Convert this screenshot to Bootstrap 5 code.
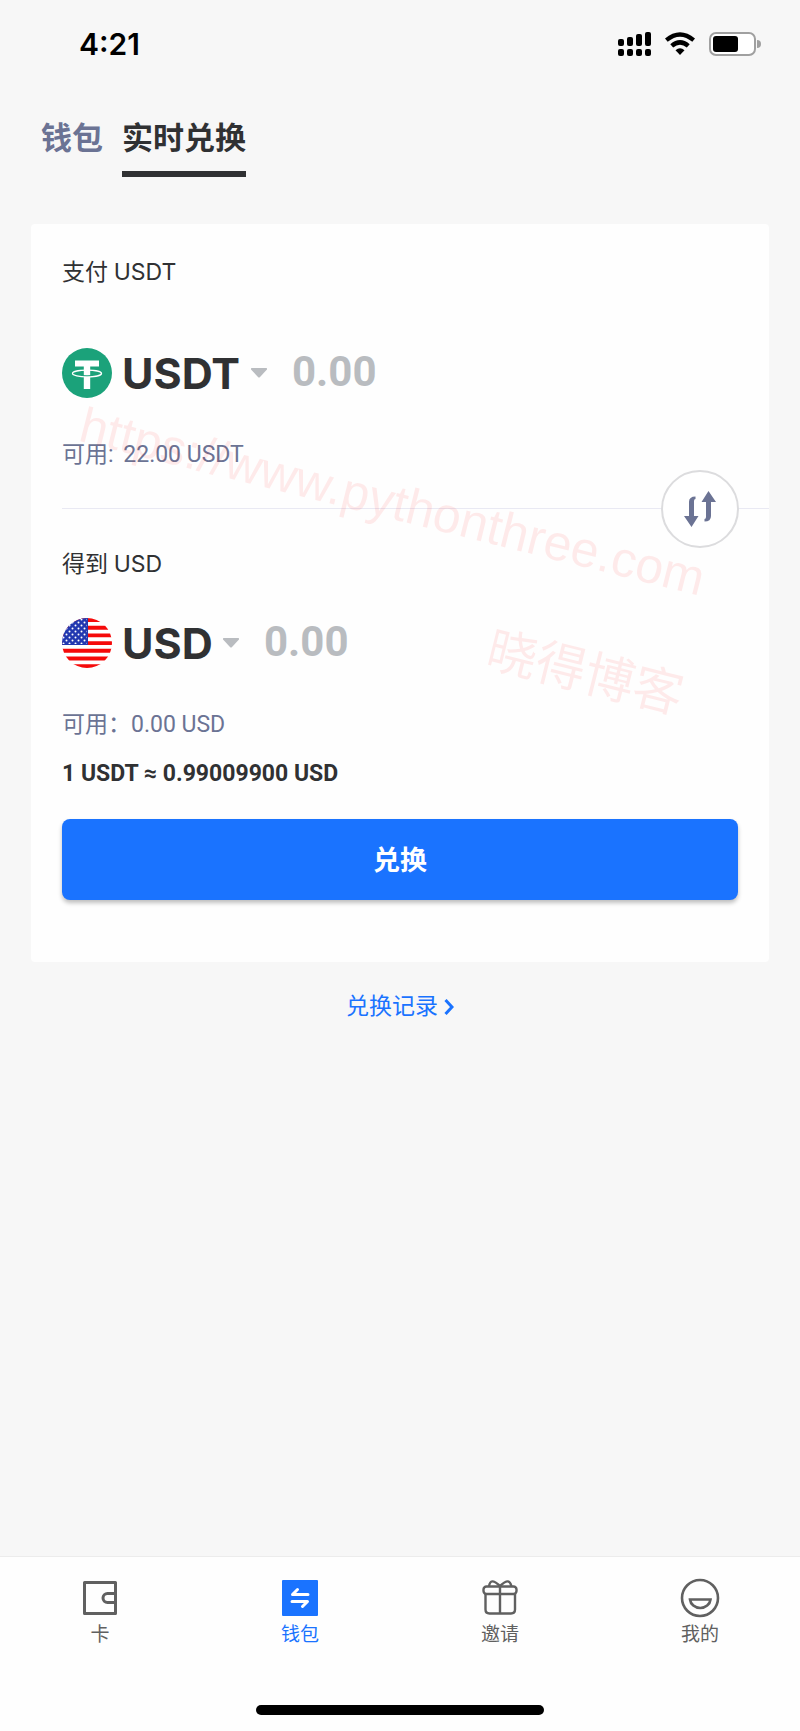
<!DOCTYPE html>
<html lang="zh-CN">
<head>
<meta charset="utf-8">
<meta name="viewport" content="width=device-width, initial-scale=1">
<title>实时兑换</title>
<link href="https://cdn.jsdelivr.net/npm/bootstrap@5.3.0/dist/css/bootstrap.min.css" rel="stylesheet">
<style>
  :root { --ink: #303133; --slate: #6b7394; --brand: #1a73ff; --hint: #b9bcc0; --mute: #606060; }
  body { background: #f7f7f7; color: var(--ink); font-family: Roboto, "Noto Sans CJK SC", sans-serif; font-size: 23px; line-height: 32px; }
  svg { display: block; flex: none; }
  .status-bar { height: 88px; padding: 0 39px 0 79px; color: #000; font: 600 30px/40px Inter, sans-serif; }
  .status-icons { gap: 14px; }
  .page-tabs { padding: 27px 41px 0; gap: 19px; font-size: 31px; font-weight: 700; line-height: 48px; }
  .page-tabs a { color: var(--slate); text-decoration: none; padding-bottom: 8px; border-bottom: 6px solid transparent; }
  .page-tabs a.active { color: var(--ink); border-color: var(--ink); }
  .swap-card { background: #fefefe; margin: 47px 31px 0; padding: 33px 31px 62px; border-radius: 4px; }
  .latin { font-family: Inter, sans-serif; line-height: 1; }
  .money { height: 50px; gap: 10px; }
  .coin-select { appearance: none; border: 0; padding: 0; background: none; color: var(--ink); font: 700 43px/50px Inter, sans-serif; }
  .amount { border: 0; padding: 0 0 2px; margin-left: 15px; min-width: 0; background: none; color: var(--ink); font: 700 42px/48px Roboto, sans-serif; }
  .amount::placeholder { color: var(--hint); opacity: 1; }
  .pay-label { margin-bottom: 59px; }
  .get-label { margin-bottom: 37px; }
  .available { color: var(--slate); margin-top: 41px; }
  .divider { height: 1px; background: #e9e9f3; margin: 37px -31px 40px 0; }
  .swap-btn { width: 78px; height: 78px; right: 30px; top: 50%; transform: translateY(-50%); border: 2px solid #dcdcde; background: #fff; z-index: 2; }
  .rate { margin: 17px 0 29px; font-weight: 700; }
  .btn-exchange { --bs-btn-bg: var(--brand); --bs-btn-color: #fff; --bs-btn-hover-bg: #0d63ea; --bs-btn-hover-color: #fff; height: 81px; border: 0; border-radius: 8px; padding: 10px 0 6px; font-size: 27px; font-weight: 700; box-shadow: 0 3px 4px rgba(0,0,0,.25); }
  .records { margin-top: 29px; }
  .records a { color: var(--brand); text-decoration: none; gap: 6px; }
  .watermark { font-family: "Liberation Sans", "Noto Sans CJK SC", sans-serif; font-size: 50px; line-height: 60px; color: rgba(255,0,0,.08); transform: rotate(14deg); transform-origin: 0 50%; white-space: nowrap; pointer-events: none; z-index: 1; }
  .mark-url { left: 50px; top: 170px; }
  .mark-name { left: 457px; top: 395px; }
  .bottom-bar { background: #fefefe; border-top: 1px solid #ececec; padding: 20px 0 16px; font-size: 19px; line-height: 24px; }
  .bottom-bar a { color: var(--mute); text-decoration: none; gap: 4px; }
  .bottom-bar a.active { color: var(--brand); }
  .home-pill { width: 36%; height: 10px; margin-top: 58px; background: #000; }
</style>
</head>
<body class="d-flex flex-column min-vh-100">
<header>
  <div class="status-bar d-flex align-items-center justify-content-between">
    <span>4:21</span>
    <div class="status-icons d-flex align-items-center">
      <svg width="33" height="24" viewBox="0 0 33 24" aria-hidden="true">
        <rect x="0" y="7" width="6" height="7" rx="2"/><rect x="9" y="5" width="6" height="9" rx="2"/><rect x="18" y="2" width="6" height="12" rx="2"/><rect x="27" y="0" width="6" height="14" rx="2"/>
        <rect x="0" y="17" width="6" height="7" rx="2"/><rect x="9" y="17" width="6" height="7" rx="2"/><rect x="18" y="17" width="6" height="7" rx="2"/><rect x="27" y="17" width="6" height="7" rx="2"/>
      </svg>
      <svg width="30" height="24" viewBox="0 0 30 24" aria-hidden="true">
        <path d="M0 6.500Q15-6 30 6.500L27.300 9.800Q15-.5 2.700 9.800Z"/><path d="M5.300 12.200Q15 3.800 24.700 12.200L21.800 15.500Q15 9.800 8.200 15.500Z"/><path d="M10.500 18.200Q15 14.300 19.500 18.200L15 23Z"/>
      </svg>
      <svg width="52" height="24" viewBox="0 0 52 24" aria-hidden="true">
        <rect x="1" y="1" width="45" height="22" rx="6" fill="#fff" stroke="#a0a0a0" stroke-width="2"/><rect x="4" y="4" width="25" height="16" rx="3"/><path d="M48 8a4 4 0 0 1 0 8Z" fill="#a0a0a0"/>
      </svg>
    </div>
  </div>
  <nav class="page-tabs d-flex" aria-label="页面">
    <a href="#wallet">钱包</a>
    <a href="#exchange" class="active" aria-current="page">实时兑换</a>
  </nav>
</header>

<main class="flex-grow-1">
  <form class="swap-card position-relative">
    <label class="pay-label d-block" for="pay">支付 <span class="latin">USDT</span></label>
    <div class="money d-flex align-items-center">
      <svg width="50" height="50" viewBox="0 0 50 50" aria-hidden="true">
        <circle cx="25" cy="25" r="25" fill="#1ba27a"/>
        <path d="M13 12.500H37V18.500H28.200V41H21.800V18.500H13Z" fill="#fff"/>
        <ellipse cx="25" cy="25.500" rx="14.500" ry="3.300" fill="none" stroke="#fff" stroke-width="1.300"/>
        <path d="M21 27.600Q25 28 29 27.600" fill="none" stroke="#1ba27a" stroke-width="1"/>
      </svg>
      <select class="coin-select" aria-label="支付币种"><option>USDT</option></select>
      <svg width="16" height="10" viewBox="0 0 16 10" aria-hidden="true"><path d="M1 0H15Q17 0 15.500 2L9 9Q8 10 7 9L.5 2Q-1 0 1 0Z" fill="#b9bcc0"/></svg>
      <input id="pay" class="amount flex-grow-1" type="text" inputmode="decimal" placeholder="0.00">
    </div>
    <div class="available">可用: <span class="ms-1">22.00 USDT</span></div>
    <div class="divider position-relative">
      <button type="button" class="swap-btn position-absolute rounded-circle p-0 d-flex align-items-center justify-content-center" aria-label="互换币种">
        <svg width="32" height="36" viewBox="0 0 32 36" fill="#6b7394" aria-hidden="true">
          <path d="M11.500 5.500V8Q10 8 10 10V25H14.500L7.500 36L0 25H5V11Q5 5.500 11.500 5.500Z"/>
          <path d="M20.500 30.500V28Q22 28 22 26V11H17.500L24.500 0L32 11H27V25Q27 30.500 20.500 30.500Z"/>
        </svg>
      </button>
    </div>
    <label class="get-label d-block" for="get">得到 <span class="latin">USD</span></label>
    <div class="money d-flex align-items-center">
      <svg width="50" height="50" viewBox="0 0 50 50" aria-hidden="true">
        <defs>
          <clipPath id="disc"><circle cx="25" cy="25" r="25"/></clipPath>
          <pattern id="stars" width="6" height="6" patternUnits="userSpaceOnUse"><circle cx="1.500" cy="1.500" r="1" fill="#fff"/><circle cx="4.500" cy="4.500" r="1" fill="#fff"/></pattern>
        </defs>
        <g clip-path="url(#disc)">
          <path fill="#fff" d="M0 0H50V50H0Z"/>
          <path d="M0 2H50M0 9.700H50M0 17.400H50M0 25.100H50M0 32.800H50M0 40.500H50M0 48.200H50" stroke="#f50a0a" stroke-width="3.900"/>
          <path fill="#2238b0" d="M0 0H26V27H0Z"/><path fill="url(#stars)" d="M0 0H25V26H0Z"/>
        </g>
      </svg>
      <select class="coin-select" aria-label="得到币种"><option>USD</option></select>
      <svg width="16" height="10" viewBox="0 0 16 10" aria-hidden="true"><path d="M1 0H15Q17 0 15.500 2L9 9Q8 10 7 9L.5 2Q-1 0 1 0Z" fill="#b9bcc0"/></svg>
      <input id="get" class="amount flex-grow-1" type="text" inputmode="decimal" placeholder="0.00">
    </div>
    <div class="available">可用：0.00 USD</div>
    <div class="rate">1 USDT ≈ 0.99009900 USD</div>
    <button type="submit" class="btn btn-exchange w-100">兑换</button>
    <div class="watermark mark-url position-absolute" aria-hidden="true">https://www.pythonthree.com</div>
    <div class="watermark mark-name position-absolute" aria-hidden="true">晓得博客</div>
  </form>
  <div class="records d-flex justify-content-center">
    <a href="#records" class="d-flex align-items-center">兑换记录
      <svg width="10" height="16" viewBox="0 0 10 16" fill="none" stroke="currentColor" stroke-width="3" aria-hidden="true"><path d="M1.500 1L8 8L1.500 15"/></svg>
    </a>
  </div>
</main>

<footer class="bottom-bar">
  <nav class="row g-0" aria-label="主导航">
    <a href="#card" class="col d-flex flex-column align-items-center">
      <svg width="40" height="42" viewBox="0 0 40 42" fill="none" stroke="currentColor" stroke-width="3" stroke-linejoin="round" aria-hidden="true"><path d="M4.500 5.500H35.500V36.500H4.500ZM35.500 16.500H27.500A4.500 4.500 0 0 0 27.500 25.500H35.500"/></svg>
      卡</a>
    <a href="#wallet" class="col d-flex flex-column align-items-center active">
      <svg width="40" height="42" viewBox="0 0 40 42" aria-hidden="true"><rect x="2" y="3" width="36" height="36" rx="1" fill="currentColor"/><path d="M28 17.500H12.500L17.500 12.500M12 24.500H27.500L22.500 29.500" fill="none" stroke="#fff" stroke-width="3" stroke-linecap="round" stroke-linejoin="round"/></svg>
      钱包</a>
    <a href="#invite" class="col d-flex flex-column align-items-center">
      <svg width="40" height="42" viewBox="0 0 40 42" fill="none" stroke="currentColor" stroke-width="2.400" stroke-linejoin="round" aria-hidden="true"><rect x="3.500" y="9.500" width="33" height="7.500" rx="3"/><path d="M5.500 17V32.500Q5.500 36.500 9.500 36.500H31Q35 36.500 35 32.500V17M20 9V36M9 9.500C10 3 13 2.500 20 9C27 2.500 30 3 31.500 9.500"/></svg>
      邀请</a>
    <a href="#mine" class="col d-flex flex-column align-items-center">
      <svg width="40" height="42" viewBox="0 0 40 42" fill="none" stroke="currentColor" stroke-width="2.600" aria-hidden="true"><circle cx="20" cy="21" r="18"/><path d="M10 22.500H30.500A10.300 9.500 0 0 1 10 22.500Z"/></svg>
      我的</a>
  </nav>
  <div class="home-pill rounded-pill mx-auto"></div>
</footer>
<script src="https://cdn.jsdelivr.net/npm/bootstrap@5.3.0/dist/js/bootstrap.bundle.min.js"></script>
</body>
</html>
